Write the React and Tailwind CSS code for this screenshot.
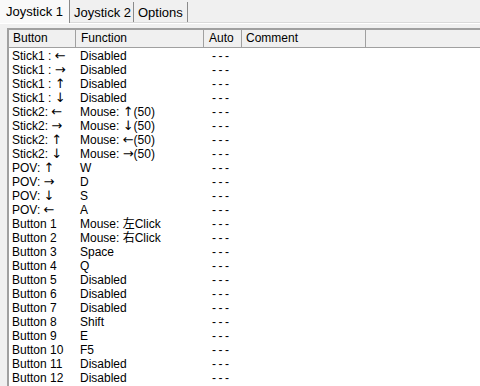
import React from "react";

const A = ({ c }) => (
  <span style={{ fontFamily: '"DejaVu Sans", sans-serif' }} className="text-[13px] leading-[14px]">
    {c}
  </span>
);

const rows = [
  [<>Stick1 : <A c="←" /></>, "Disabled"],
  [<>Stick1 : <A c="→" /></>, "Disabled"],
  [<>Stick1 : <A c="↑" /></>, "Disabled"],
  [<>Stick1 : <A c="↓" /></>, "Disabled"],
  [<>Stick2: <A c="←" /></>, <>Mouse: <A c="↑" />(50)</>],
  [<>Stick2: <A c="→" /></>, <>Mouse: <A c="↓" />(50)</>],
  [<>Stick2: <A c="↑" /></>, <>Mouse: <A c="←" />(50)</>],
  [<>Stick2: <A c="↓" /></>, <>Mouse: <A c="→" />(50)</>],
  [<>POV: <A c="↑" /></>, "W"],
  [<>POV: <A c="→" /></>, "D"],
  [<>POV: <A c="↓" /></>, "S"],
  [<>POV: <A c="←" /></>, "A"],
  ["Button 1", "Mouse: 左Click"],
  ["Button 2", "Mouse: 右Click"],
  ["Button 3", "Space"],
  ["Button 4", "Q"],
  ["Button 5", "Disabled"],
  ["Button 6", "Disabled"],
  ["Button 7", "Disabled"],
  ["Button 8", "Shift"],
  ["Button 9", "E"],
  ["Button 10", "F5"],
  ["Button 11", "Disabled"],
  ["Button 12", "Disabled"],
];

export default function App() {
  return (
    <div
      className="w-[480px] h-[386px] overflow-hidden bg-[#f0f0f0] text-black"
      style={{ fontFamily: '"Liberation Sans", "Noto Sans CJK JP", sans-serif' }}
    >
      {/* Tabs */}
      <div className="relative flex items-end h-[23px] border-b border-[#d9d9d9]">
        <div className="h-[23px] w-[70px] bg-[#f9f9f9] border-r border-[#8a8a8a] flex items-center pl-[6px] text-[13px] leading-none -mb-px z-10">
          Joystick 1
        </div>
        <div className="h-[20px] w-[64px] border-r border-[#8a8a8a] flex items-center pl-[4px] text-[13px] leading-none">
          Joystick 2
        </div>
        <div className="h-[20px] w-[54px] border-r border-[#8a8a8a] flex items-center pl-[4px] text-[13px] leading-none">
          Options
        </div>
      </div>
      <div className="h-px bg-white" />
      {/* List */}
      <div className="pl-[7px] pt-[4px]">
        <div className="h-[400px] bg-white border-l-2 border-t-2 border-l-[#a0a0a0] border-t-[#a0a0a0] text-[12px]">
          <div className="flex h-[18px] leading-[16px] bg-[#f0f0f0] border-b border-[#a0a0a0]">
            <div className="w-[67px] pl-[4px] border-r border-[#a0a0a0]">Button</div>
            <div className="w-[128px] pl-[5px] border-r border-[#a0a0a0]">Function</div>
            <div className="w-[38px] pl-[5px] border-r border-[#a0a0a0]">Auto</div>
            <div className="w-[124px] pl-[4px] border-r border-[#a0a0a0]">Comment</div>
            <div className="flex-1" />
          </div>
          <div className="pt-[1px]">
            {rows.map(([b, f], i) => (
              <div key={i} className="flex h-[14px] leading-[14px] whitespace-nowrap overflow-hidden">
                <div className="w-[67px] pl-[3px]">{b}</div>
                <div className="w-[128px] pl-[4px]">{f}</div>
                <div className="w-[38px] pl-[8px] tracking-[2.5px]">---</div>
                <div className="flex-1" />
              </div>
            ))}
          </div>
        </div>
      </div>
    </div>
  );
}
